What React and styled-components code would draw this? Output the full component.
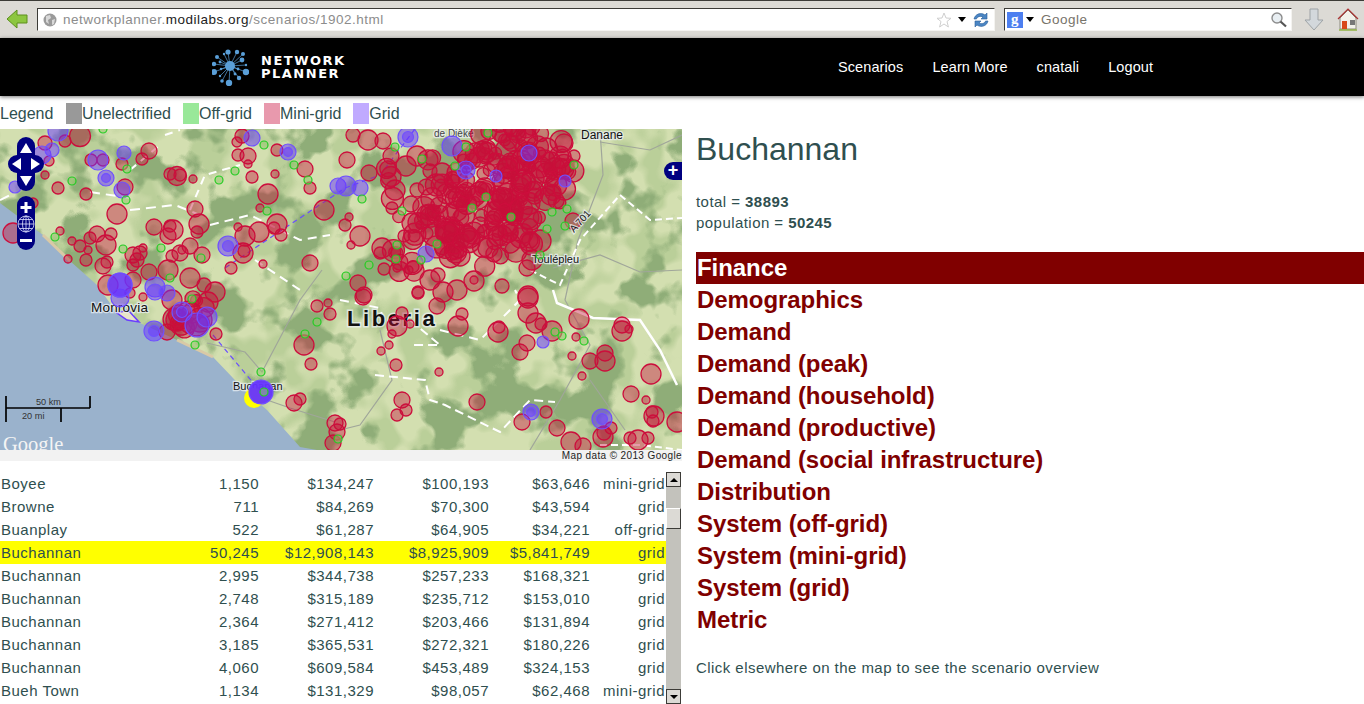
import React from "react";
import styled, { createGlobalStyle } from "styled-components";

const Global = createGlobalStyle`
  html, body { margin: 0; height: 100%; overflow: hidden; background: #fff; }
  body { font-family: "Liberation Sans", Arial, sans-serif; color: #2f4f4f; }
`;

// [x, y, r] in page pixels, the map svg viewBox starts at 0 129
const REDS = [
  [80,136,10.5],[45,143,7],[65,141,6],[49,161,5],[45,175,4],[58,188,6],[86,194,6],[117,214,10],[149,151,8],[142,159,6],
  [122,164,6],[91,160,6],[103,160,6],[125,187,8],[177,176,9.5],[170,174,6],[180,175,6],[193,179,4],[242,136,7],[237,142,5],
  [248,156,8],[238,155,6],[248,164,4],[277,150,6],[252,177,6],[275,174,4],[268,194,10],[305,169,8],[310,188,6],[324,210,10],
  [260,208,4],[195,209,8],[199,224,10],[173,230,10],[170,226,6],[168,236,8],[154,227,8],[197,232,6],[238,227,4],[245,236,10],
  [259,232,10],[277,224,10],[274,228,6],[281,235,6],[13,233,10],[33,203,5],[60,231,4],[72,241,4],[80,246,6],[90,238,6],
  [97,234,8],[111,234,6],[106,245,10],[88,250,4],[68,259,4],[86,260,6],[103,266,8],[107,262,6],[133,255,8],[140,253,7],
  [143,248,4],[133,265,6],[137,260,7],[149,272,8],[172,256,6],[180,253,8],[190,246,8],[182,250,4],[202,255,8],[168,270,10],
  [190,278,10],[231,268,6],[243,253,10],[244,251,6],[263,264,4],[310,263,8],[108,285,10],[133,280,8],[215,292,10],[204,285,7],
  [167,332,8],[216,334,6],[200,320,12],[192,313,10],[208,302,10],[172,300,10],[143,297,4],[130,293,5],[304,345,10],[311,364,6],
  [294,403,8],[300,399,6],[317,306,6],[328,303,4],[330,314,6],[335,423,8],[333,443,8],[353,135,7],[368,140,10],[383,141,8],
  [391,156,8],[347,160,8],[406,166,10],[369,173,8],[417,156,10],[395,190,10],[392,208,6],[411,204,8],[417,190,7],[442,173,10],
  [430,171,7],[427,215,10],[412,223,10],[457,211,10],[440,222,6],[452,225,8],[480,225,8],[508,226,10],[470,238,10],[488,248,10],
  [510,243,10],[498,236,10],[460,256,10],[452,253,7],[540,241,11],[530,240,8],[527,268,8],[532,260,10],[360,236,10],[382,248,10],
  [380,253,6],[351,245,4],[404,236,6],[427,233,6],[420,225,4],[448,237,6],[397,253,6],[397,268,4],[409,270,4],[384,269,6],
  [358,283,8],[364,295,8],[430,280,10],[438,275,7],[457,290,10],[474,281,10],[474,280,4],[502,286,7],[418,292,6],[528,296,10],
  [345,225,6],[349,217,4],[574,156,6],[564,143,9],[573,221,8],[363,297,8],[418,293,6],[443,292,10],[437,306,8],[462,314,6],
  [458,326,10],[402,313,6],[397,326,10],[410,324,4],[392,334,4],[389,345,4],[381,351,4],[396,365,6],[439,372,4],[477,402,8],
  [402,400,8],[406,410,6],[397,415,6],[498,332,10],[499,327,6],[528,298,10],[528,313,10],[536,323,10],[541,324,6],[552,331,10],
  [527,343,8],[520,352,8],[579,319,10],[622,331,10],[622,325,8],[629,329,4],[576,337,4],[572,356,4],[590,361,8],[605,353,8],
  [605,361,10],[582,376,4],[651,374,10],[631,394,8],[646,400,4],[654,416,10],[652,412,6],[653,421,6],[677,422,10],[546,412,6],
  [522,422,8],[557,428,8],[571,442,10],[583,446,8],[611,428,6],[603,437,10],[604,433,7],[638,440,10],[630,438,6],[648,438,6],
  [340,424,6],[337,432,8],
];

const PURPLES = [
  [15,187,6],[124,153,7],[98,160,10],[106,178,8,1],[122,190,8],[288,152,8,1],[252,138,8],[58,131,10],[42,155,9],[52,150,7],
  [228,246,10,1],[338,186,8],[120,285,12],[155,287,10],[154,331,10,1],[120,298,9],[182,312,10,1],[197,325,12],[207,317,10],
  [155,292,8],[167,293,8],[408,137,10,1],[452,146,10],[466,170,9,1],[346,186,10],[360,188,8],[529,153,8],[496,176,6],[565,181,6],
  [426,254,8],[543,342,6],[531,412,8,1],[602,419,10,1],
];

const GREENS = [
  [103,129],[264,145],[294,165],[235,171],[219,180],[72,181],[127,169],[126,200],[308,180],[267,211],[55,237],[123,249],
  [161,248],[201,258],[170,278],[192,299],[195,345],[261,372],[317,322],[305,334],[264,392],[338,439],[488,133],[395,147],
  [422,159],[466,147],[402,211],[362,199],[486,197],[472,208],[511,217],[574,165],[567,209],[552,212],[547,229],[565,226],
  [540,255],[437,244],[397,245],[396,259],[421,260],[369,265],[346,276],[455,166],[555,332],[562,336],[584,341],
];

// dense blobs of settlements: [cx, cy, rx, ry, count]
const BLOBS = [
  [512, 172, 62, 50, 120],
  [480, 222, 68, 36, 55],
  [420, 200, 45, 50, 25],
  [440, 255, 48, 32, 22],
  [195, 315, 22, 18, 14],
];
const blob = [];
let seed = 17;
const rnd = () => {
  seed = (seed * 16807) % 2147483647;
  return seed / 2147483647;
};
BLOBS.forEach(([cx, cy, rx, ry, count]) => {
  for (let i = 0; i < count; i++) {
    const a = rnd() * Math.PI * 2;
    const d = Math.sqrt(rnd());
    blob.push([cx + Math.cos(a) * d * rx, cy + Math.sin(a) * d * ry, [6, 8, 10, 11][Math.floor(rnd() * 4)]]);
  }
});

const ROWS = [
  ["Boyee", "1,150", "$134,247", "$100,193", "$63,646", "mini-grid"],
  ["Browne", "711", "$84,269", "$70,300", "$43,594", "grid"],
  ["Buanplay", "522", "$61,287", "$64,905", "$34,221", "off-grid"],
  ["Buchannan", "50,245", "$12,908,143", "$8,925,909", "$5,841,749", "grid", true],
  ["Buchannan", "2,995", "$344,738", "$257,233", "$168,321", "grid"],
  ["Buchannan", "2,748", "$315,189", "$235,712", "$153,010", "grid"],
  ["Buchannan", "2,364", "$271,412", "$203,466", "$131,894", "grid"],
  ["Buchannan", "3,185", "$365,531", "$272,321", "$180,226", "grid"],
  ["Buchannan", "4,060", "$609,584", "$453,489", "$324,153", "grid"],
  ["Bueh Town", "1,134", "$131,329", "$98,057", "$62,468", "mini-grid"],
];

const SECTIONS = [
  "Finance", "Demographics", "Demand", "Demand (peak)", "Demand (household)", "Demand (productive)",
  "Demand (social infrastructure)", "Distribution", "System (off-grid)", "System (mini-grid)", "System (grid)", "Metric",
];

const LEGEND = [
  ["Unelectrified", "#999999"],
  ["Off-grid", "#99e899"],
  ["Mini-grid", "#e899ad"],
  ["Grid", "#c0aaff"],
];

const LOGO_DOTS = [
  [16,3,2.6],[25,3,2.2],[31,5,2],[5,8,2],[30,11,2.4],[2,15,2.2],[8,13,1.4],[34,16,1.2],[2,23,3],[9,20,1.2],[34,23,3.2],
  [26,20,1.4],[23,25,1.4],[8,27,1.2],[27,29,2.2],[10,32,1.8],[17,34,3.2],[12,5,1.2],
];

const Page = styled.div`
  width: 1364px;
  height: 704px;
  overflow: hidden;
`;

const Chrome = styled.div`
  height: 38px;
  box-sizing: border-box;
  padding: 7px 0 0 6px;
  display: flex;
  align-items: flex-start;
  background: #dcdad5;
  border-top: 1px solid #3c3b37;
`;

const BackIcon = styled.svg`
  width: 23px;
  height: 20px;
  margin: 1px 8px 0 0;
`;

const UrlBox = styled.div`
  width: 958px;
  height: 23px;
  box-sizing: border-box;
  display: flex;
  align-items: center;
  gap: 6px;
  padding: 0 4px 0 5px;
  background: #fff;
  border: 1px solid #f4f3f0;
  border-top-color: #3c3b37;
  border-left-color: #3c3b37;
  font-size: 13.5px;
  letter-spacing: 0.5px;
  color: #8c8c8c;
`;

const UrlText = styled.span`
  flex: 1;
  b {
    font-weight: normal;
    color: #222;
  }
`;

const SearchBox = styled(UrlBox)`
  width: 288px;
  margin-left: 9px;
  gap: 3px;
  padding-left: 2px;
`;

const SearchWord = styled.span`
  flex: 1;
  margin-left: 4px;
  color: #77736a;
`;

const GBadge = styled.span`
  width: 16px;
  height: 16px;
  background: #4d7ff0;
  color: #fff;
  font: bold 15px/15px "Liberation Serif", serif;
  text-align: center;
`;

const Caret = styled.i`
  width: 0;
  height: 0;
  border: 4px solid transparent;
  border-top: 5px solid #000;
  border-bottom: 0;
`;

const ToolIcon = styled.svg`
  width: 22px;
  height: 24px;
  margin-left: ${(p) => p.$gap}px;
`;

const Header = styled.header`
  height: 58px;
  display: flex;
  align-items: center;
  background: #000;
  padding-left: 212px;
  box-shadow: 0 1px 4px rgba(0, 0, 0, 0.55);
  position: relative;
`;

const Brand = styled.div`
  display: flex;
  align-items: center;
  gap: 12px;
  width: 626px;
  flex: none;
`;

const BrandName = styled.div`
  color: #fff;
  font-family: "DejaVu Sans", sans-serif;
  font-size: 13px;
  font-weight: bold;
  line-height: 13px;
  letter-spacing: 1.5px;
  text-transform: uppercase;
`;

const Nav = styled.nav`
  display: flex;
  gap: 29px;
  a {
    color: #fff;
    font-size: 14.5px;
    letter-spacing: 0.1px;
    text-decoration: none;
  }
`;

const Legend = styled.div`
  height: 33px;
  box-sizing: border-box;
  padding-top: 7px;
  display: flex;
  align-items: flex-start;
  font-size: 16px;
  line-height: 21px;
`;

const LegendTitle = styled.span`
  width: 66px;
`;

const LegendItem = styled.span`
  display: flex;
  margin-right: 12px;
  &::before {
    content: "";
    width: 16px;
    height: 21px;
    background: ${(p) => p.$color};
  }
`;

const Main = styled.div`
  display: flex;
`;

const Left = styled.div`
  width: 682px;
  flex: none;
`;

const MapBox = styled.div`
  position: relative;
  height: 321px;
  overflow: hidden;
  background: #c8d8a6;
`;

const MapSvg = styled.svg`
  display: block;
`;

const PanZoom = styled.svg`
  position: absolute;
  left: 0;
  top: 0;
`;

const Expand = styled.div`
  position: absolute;
  right: 0;
  top: 33px;
  width: 18px;
  height: 18px;
  border-radius: 9px 0 0 9px;
  background: #000080;
  color: #fff;
  font: bold 18px/17px "Liberation Sans", sans-serif;
  text-align: center;
`;

const Credit = styled.div`
  height: 11px;
  background: #f2f2f2;
  color: #222;
  font-size: 10px;
  line-height: 11px;
  letter-spacing: 0.38px;
  text-align: right;
  white-space: nowrap;
`;

const TableWrap = styled.div`
  display: flex;
  height: 243px;
  padding-top: 11px;
  box-sizing: border-box;
`;

const Rows = styled.div`
  width: 666px;
  flex: none;
`;

const Row = styled.div`
  display: grid;
  grid-template-columns: 168px 90px 115px 115px 101px 75px;
  height: 23px;
  align-items: center;
  padding-left: 1px;
  box-sizing: border-box;
  font-size: 15px;
  letter-spacing: 0.5px;
  background: ${(p) => (p.$active ? "#ffff00" : "transparent")};
  color: #2f4f4f;
`;

const Cell = styled.span`
  text-align: right;
  white-space: nowrap;
`;

const Name = styled(Cell)`
  text-align: left;
`;

const Scrollbar = styled.div`
  width: 15px;
  height: 232px;
  position: relative;
  background: #c3c2bc;
`;

const ScrollButton = styled.div`
  position: absolute;
  left: 0;
  ${(p) => (p.$end ? "bottom: 0" : "top: 0")};
  width: 15px;
  height: 15px;
  box-sizing: border-box;
  background: #dcdad5;
  border: 1px solid #3c3b37;
  display: flex;
  align-items: center;
  justify-content: center;
  &::after {
    content: "";
    border: 4px solid transparent;
    ${(p) => (p.$end ? "border-top: 4px solid #000; border-bottom: 0" : "border-bottom: 4px solid #000; border-top: 0")};
  }
`;

const Thumb = styled.div`
  position: absolute;
  left: 0;
  top: 36px;
  width: 15px;
  height: 21px;
  box-sizing: border-box;
  background: #dcdad5;
  border: 1px solid #3c3b37;
  border-top-color: #fff;
  border-left-color: #fff;
`;

const Detail = styled.section`
  flex: 1;
  padding: 0 0 0 14px;
`;

const Title = styled.h1`
  margin: 0;
  font-size: 32px;
  font-weight: normal;
  line-height: 40px;
`;

const Stats = styled.div`
  margin-top: 22px;
  font-size: 15px;
  line-height: 21px;
  letter-spacing: 0.45px;
`;

const Sections = styled.div`
  margin-top: 19px;
`;

const Section = styled.div`
  height: 32px;
  padding-left: 1px;
  font-size: 24px;
  font-weight: bold;
  line-height: 32px;
  letter-spacing: -0.06px;
  color: ${(p) => (p.$active ? "#fff" : "#800000")};
  background: ${(p) => (p.$active ? "#800000" : "transparent")};
`;

const Hint = styled.p`
  margin: 22px 0 0;
  font-size: 15px;
  line-height: 20px;
  letter-spacing: 0.45px;
`;

const MapLabel = styled.text`
  font-family: "Liberation Sans", sans-serif;
  font-size: ${(p) => p.$size || 12}px;
  font-weight: ${(p) => (p.$bold ? "bold" : "normal")};
  letter-spacing: ${(p) => p.$track || 0}px;
  fill: ${(p) => p.$fill || "#111"};
  paint-order: stroke;
  stroke: rgba(235, 240, 245, 0.75);
  stroke-width: ${(p) => p.$halo ?? 2.5}px;
`;

const Logo = () => (
  <svg width="37" height="37" viewBox="0 0 37 37">
    <g stroke="#5a9fd8" strokeWidth="0.7">
      {LOGO_DOTS.map(([x, y], i) => (
        <line key={i} x1="18" y1="17" x2={x} y2={y} />
      ))}
    </g>
    <g fill="#5a9fd8">
      <circle cx="18" cy="17" r="5" />
      {LOGO_DOTS.map(([x, y, r], i) => (
        <circle key={i} cx={x} cy={y} r={r} />
      ))}
    </g>
  </svg>
);

const MapDrawing = () => (
  <MapSvg width="682" height="321" viewBox="0 129 682 321">
    <defs>
      <filter id="forest" x="0" y="0" width="100%" height="100%" colorInterpolationFilters="sRGB">
        <feTurbulence type="fractalNoise" baseFrequency="0.021" numOctaves="4" seed="11" />
        <feColorMatrix values="0 0 0 0 0.56  0 0 0 0 0.68  0 0 0 0 0.47  9 0 0 0 -4.5" />
      </filter>
      <filter id="hills" x="0" y="0" width="100%" height="100%" colorInterpolationFilters="sRGB">
        <feTurbulence type="fractalNoise" baseFrequency="0.03" numOctaves="2" seed="4" />
        <feColorMatrix values="0 0 0 0 0.73  0 0 0 0 0.81  0 0 0 0 0.6  7 0 0 0 -3.2" />
      </filter>
    </defs>
    <rect x="0" y="129" width="682" height="321" fill="#d3dfb0" />
    <rect x="0" y="129" width="682" height="321" filter="url(#hills)" />
    <rect x="0" y="129" width="682" height="321" filter="url(#forest)" />
    <path d="M0 203 L43 235 L70 261 L97 285 L117 313 L140 323 L177 340 L213 357 L233 378 L247 393 L267 410 L300 447 L317 450 L0 450 Z" fill="#9ab2cc" />
    <path d="M43 235 L70 261 M177 340 L213 357" stroke="#d9c9a6" strokeWidth="3" fill="none" />
    <g fill="none" stroke="#a0a69a" strokeWidth="1.2">
      <path d="M207 343 L245 352 L262 372 L300 300 L322 270" />
      <path d="M267 400 L290 408 L335 422" />
      <path d="M600 130 L603 175 L578 240 L565 300 L590 345 L560 400 L530 450" />
      <path d="M600 142 L650 150 L682 135" />
      <path d="M553 268 L600 255 L640 272 L682 270" />
      <path d="M380 330 L392 380 L360 425 L340 430" />
      <path d="M590 380 L625 430" />
    </g>
    <g fill="none" stroke="#fff" strokeWidth="2">
      <path d="M0 200 L10 195 M90 192 L130 198 M130 210 L175 205 L200 215" strokeDasharray="10 6" />
      <path d="M165 135 L180 130 M130 170 L160 145 M190 210 L205 175 L240 165" strokeDasharray="8 6" />
      <path d="M210 225 L250 215 L300 240 L330 235 M255 260 L300 290" strokeDasharray="9 6" />
      <path d="M410 320 L440 345 L410 345 M375 375 L425 380 L430 400 L445 405 L500 432 L530 400 L555 402" strokeDasharray="9 5" />
      <path d="M340 300 L380 308 L385 325 M440 330 L480 340 L520 300 L515 290" strokeDasharray="9 6" />
      <path d="M553 290 L557 303 L593 318 L640 320 L660 350 L677 385" strokeWidth="2.5" />
      <path d="M530 270 L560 285 L580 240 L620 195 L650 220 L682 218" strokeDasharray="7 4" />
      <path d="M600 445 L640 445 L682 450" strokeDasharray="7 4" />
    </g>
    <path d="M415 129 L380 175 L345 188 L225 268 M213 335 L255 385" fill="none" stroke="#6a4dff" strokeWidth="1.2" strokeDasharray="5 4" />
    <path d="M117 313 L128 310 L139 322 L127 320 Z" fill="#e8e4c8" stroke="#6a3dff" strokeWidth="1.5" />
    <MapLabel x="91" y="312" $size={13.5} $track={0.2}>Monrovia</MapLabel>
    <MapLabel x="233" y="390" $size={11}>Buchanan</MapLabel>
    <MapLabel x="347" y="326" $size={22} $bold $track={2.6} $halo={3}>Liberia</MapLabel>
    <MapLabel x="581" y="138.5" $size={12}>Danane</MapLabel>
    <MapLabel x="434" y="137" $size={10} $fill="#444">de Dièké</MapLabel>
    <g stroke="#cc0e3c" strokeWidth="1.3" fill="#c5103a" fillOpacity="0.42">
      {REDS.map(([x, y, r], i) => (
        <circle key={i} cx={x} cy={y} r={r} />
      ))}
      {blob.map(([x, y, r], i) => (
        <circle key={`b${i}`} cx={x} cy={y} r={r} />
      ))}
    </g>
    <MapLabel x="532" y="263" $size={11}>Toulépleu</MapLabel>
    <MapLabel x="574" y="233" $size={10} transform="rotate(-48 574 233)">A 701</MapLabel>
    <circle cx="254" cy="398" r="10" fill="#ffff00" />
    <g fill="#6633ff" fillOpacity="0.5" stroke="#7050ff" strokeWidth="1.2">
      {PURPLES.map(([x, y, r, ring], i) => (
        <g key={i}>
          <circle cx={x} cy={y} r={r} />
          {ring && <circle cx={x} cy={y} r={r * 0.55} />}
        </g>
      ))}
      <circle cx="261" cy="392" r="12" fill="#6633ff" fillOpacity="0.95" />
      <circle cx="120" cy="285" r="12" fill="#6633ff" fillOpacity="0.7" />
    </g>
    <g fill="#8fc46a" fillOpacity="0.55" stroke="#22cc22" strokeWidth="1.2">
      {GREENS.map(([x, y], i) => (
        <circle key={i} cx={x} cy={y} r="4" />
      ))}
    </g>
    <path d="M6 396 V422 M6 408 H90 M90 396 V408 M61 408 V422" fill="none" stroke="#000" strokeWidth="1.7" />
    <MapLabel x="36" y="405" $size={9.2} $fill="#333" $halo={0}>50 km</MapLabel>
    <MapLabel x="22" y="419" $size={9.2} $fill="#333" $halo={0}>20 mi</MapLabel>
    <MapLabel x="3" y="451" $size={20.5} $fill="#f4f4f4" $halo={0} style={{ fontFamily: '"Liberation Serif", serif' }}>Google</MapLabel>
  </MapSvg>
);

const PanZoomControl = () => (
  <PanZoom width="50" height="125" viewBox="0 0 50 125">
    <g fill="#000080">
      <rect x="17" y="8" width="18" height="54" rx="9" />
      <rect x="8" y="26" width="36" height="18" rx="9" />
      <rect x="17" y="67" width="18" height="54" rx="9" />
    </g>
    <g fill="#fff">
      <path d="M26 14 L32 24 H20 Z" />
      <path d="M26 57 L32 47 H20 Z" />
      <path d="M12 35 L21 29 V41 Z" />
      <path d="M40 35 L31 29 V41 Z" />
      <path d="M24.5 73 h3 v4 h4 v3 h-4 v4 h-3 v-4 h-4 v-3 h4 Z" />
      <rect x="20" y="110" width="12" height="3" />
    </g>
    <g fill="none" stroke="#dfe3ff" strokeWidth="0.8">
      <circle cx="26" cy="95" r="8" />
      <ellipse cx="26" cy="95" rx="3.5" ry="8" />
      <path d="M18 95 H34 M19.5 90.5 H32.5 M19.5 99.5 H32.5 M26 87 V103" />
    </g>
  </PanZoom>
);

export default function App() {
  return (
    <Page>
      <Global />
      <Chrome>
        <BackIcon viewBox="0 0 23 20">
          <path d="M1 10 L11 1 V6 H21 V14 H11 V19 Z" fill="#8cc63f" stroke="#5c8f1c" strokeWidth="1" />
        </BackIcon>
        <UrlBox>
          <svg width="14" height="14" viewBox="0 0 14 14">
            <circle cx="7" cy="7" r="6.5" fill="#9a9a9a" />
            <path d="M3 3 L7 2 L8 5 L5 7 L6 11 L3 9 Z M9 7 L12 6 L11 11 L9 12 Z" fill="#d8d8d8" />
          </svg>
          <UrlText>networkplanner.<b>modilabs.org</b>/scenarios/1902.html</UrlText>
          <svg width="16" height="16" viewBox="0 0 16 16">
            <path d="M8 1 L10 6 L15 6.3 L11 9.5 L12.4 15 L8 12 L3.6 15 L5 9.5 L1 6.3 L6 6 Z" fill="#fff" stroke="#cfcfcf" />
          </svg>
          <Caret />
          <svg width="18" height="18" viewBox="0 0 18 18">
            <path d="M2 8 C3 3 9 1 13 4 L15 2 V8 H9 L11 6 C8 4.5 5 6 4.5 8 Z" fill="#4b86c4" stroke="#2b5f9a" strokeWidth="0.6" />
            <path d="M16 10 C15 15 9 17 5 14 L3 16 V10 H9 L7 12 C10 13.5 13 12 13.5 10 Z" fill="#4b86c4" stroke="#2b5f9a" strokeWidth="0.6" />
          </svg>
        </UrlBox>
        <SearchBox>
          <GBadge>g</GBadge>
          <Caret />
          <SearchWord>Google</SearchWord>
          <svg width="17" height="17" viewBox="0 0 17 17">
            <circle cx="7" cy="7" r="5" fill="#e8eef2" stroke="#8d8d8d" strokeWidth="1.4" />
            <path d="M10.5 10.5 L16 15.5" stroke="#555" strokeWidth="2.2" />
          </svg>
        </SearchBox>
        <ToolIcon $gap={11} viewBox="0 0 22 24">
          <path d="M7 1 H15 V12 H20 L11 22 L2 12 H7 Z" fill="#d3d8dc" stroke="#9ea3a6" />
        </ToolIcon>
        <ToolIcon $gap={12} viewBox="0 0 22 24">
          <path d="M3 10 L11 2 L19 10 V21 H3 Z" fill="#f2f1ea" stroke="#8d8a7e" />
          <path d="M1 11 L11 1 L21 11" fill="none" stroke="#a33" strokeWidth="1.2" />
          <rect x="5" y="13" width="5" height="8" fill="#d8491a" />
          <rect x="13" y="12" width="5" height="5" fill="#777" />
          <path d="M2 22 H20" stroke="#8cb13a" strokeWidth="1.4" />
        </ToolIcon>
      </Chrome>
      <Header>
        <Brand>
          <Logo />
          <BrandName>Network<br />Planner</BrandName>
        </Brand>
        <Nav>
          <a href="#scenarios">Scenarios</a>
          <a href="#learn">Learn More</a>
          <a href="#user">cnatali</a>
          <a href="#logout">Logout</a>
        </Nav>
      </Header>
      <Legend>
        <LegendTitle>Legend</LegendTitle>
        {LEGEND.map(([label, color]) => (
          <LegendItem key={label} $color={color}>{label}</LegendItem>
        ))}
      </Legend>
      <Main>
        <Left>
          <MapBox>
            <MapDrawing />
            <PanZoomControl />
            <Expand>+</Expand>
          </MapBox>
          <Credit>Map data © 2013 Google</Credit>
          <TableWrap>
            <Rows>
              {ROWS.map(([name, pop, a, b, c, kind, active], i) => (
                <Row key={i} $active={active}>
                  <Name>{name}</Name>
                  <Cell>{pop}</Cell>
                  <Cell>{a}</Cell>
                  <Cell>{b}</Cell>
                  <Cell>{c}</Cell>
                  <Cell>{kind}</Cell>
                </Row>
              ))}
            </Rows>
            <Scrollbar>
              <ScrollButton />
              <Thumb />
              <ScrollButton $end />
            </Scrollbar>
          </TableWrap>
        </Left>
        <Detail>
          <Title>Buchannan</Title>
          <Stats>
            total = <b>38893</b>
            <br />
            population = <b>50245</b>
          </Stats>
          <Sections>
            {SECTIONS.map((s, i) => (
              <Section key={s} $active={i === 0}>{s}</Section>
            ))}
          </Sections>
          <Hint>Click elsewhere on the map to see the scenario overview</Hint>
        </Detail>
      </Main>
    </Page>
  );
}
